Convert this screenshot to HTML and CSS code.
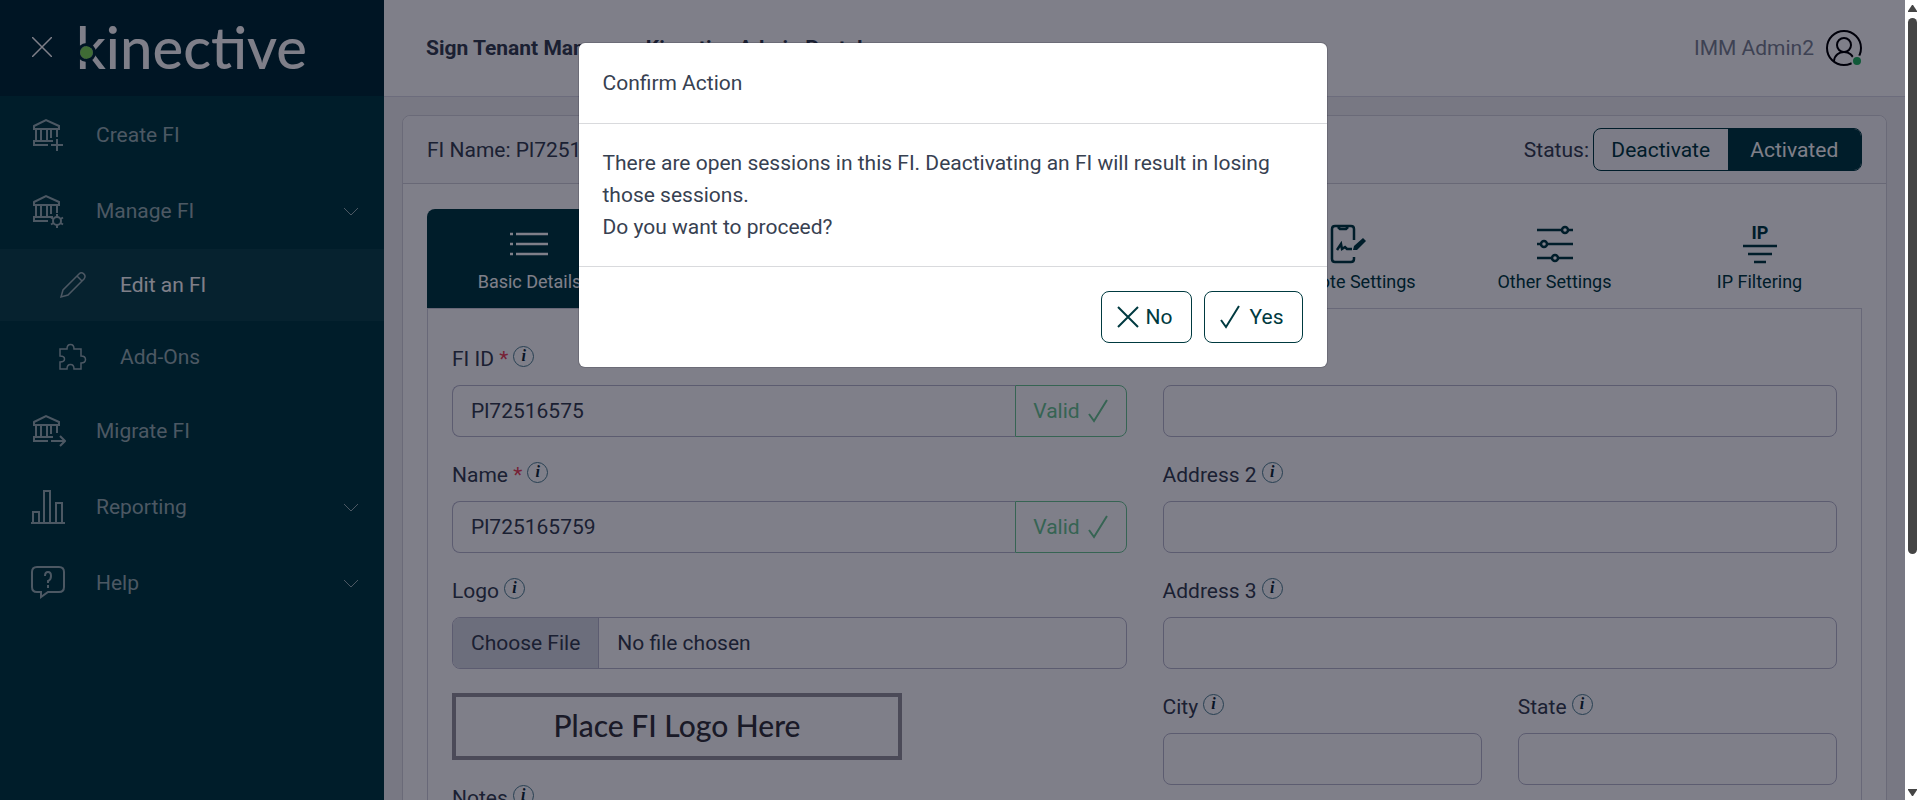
FILE: index.html
```html
<!DOCTYPE html>
<html lang="en">

<head>
    <meta charset="UTF-8">
    <meta name="viewport" content="width=device-width, initial-scale=1">
    <title>Sign Tenant Manager</title>
    <link rel="stylesheet" href="styles.css">
</head>

<body>
    <!-- shared icon shapes -->
    <svg class="icon-defs" aria-hidden="true">
        <symbol id="bank" viewBox="0 0 36 36">
            <path d="M4 9 16 3l13 6v3H4zM6 12v11M11 12v11M17 12v11M21 12v9M27 12v8M4 28v-4h19M3 28h15" />
        </symbol>
        <symbol id="chevron" viewBox="0 0 16 9">
            <path d="M1 1l7 7 7-7" />
        </symbol>
        <symbol id="check" viewBox="0 0 20 24">
            <path d="M1 15l5 7L19 1" />
        </symbol>
    </svg>

    <div class="app">
        <div class="page">
            <aside class="sidebar">
                <div class="brand-bar">
                    <button class="close-menu" type="button" aria-label="Close menu">
                        <svg width="20" height="20" viewBox="0 0 20 20"><path d="M0 0l20 20M20 0L0 20" /></svg>
                    </button>
                    <a class="brand" href="#">kinective</a>
                </div>
                <nav class="menu">
                    <a class="menu-item" href="#">
                        <svg class="menu-icon" viewBox="0 0 36 36"><use href="#bank" /><path d="M27 22v12M21 28h12" /></svg>
                        <span>Create FI</span>
                    </a>
                    <a class="menu-item" href="#">
                        <svg class="menu-icon" viewBox="0 0 36 36"><use href="#bank" /><circle cx="27" cy="28" r="4" /><path d="M27 21v3M27 32v3M21 24.500l2.500 1.500M30.500 30l2.500 1.500M21 31.500l2.500-1.500M30.500 26l2.500-1.500" /></svg>
                        <span>Manage FI</span>
                        <svg class="chevron"><use href="#chevron" /></svg>
                    </a>
                    <a class="menu-item sub-item active" href="#">
                        <svg class="menu-icon" viewBox="0 0 28 28"><path d="M2 26l2-7L20 3c3-3 8 1 5 5L9 24zM18 5l5 5" /></svg>
                        <span>Edit an FI</span>
                    </a>
                    <a class="menu-item sub-item" href="#">
                        <svg class="menu-icon" viewBox="0 0 28 28"><path d="M1 6h7c0-6 7-6 7 0h7v7c6 0 6 7 0 7v6h-7c0-6-7-6-7 0H1v-7c6 0 6-6 0-6z" /></svg>
                        <span>Add-Ons</span>
                    </a>
                    <a class="menu-item" href="#">
                        <svg class="menu-icon" viewBox="0 0 36 36"><use href="#bank" /><path d="M21 28h14M30 23l5 5-5 5" /></svg>
                        <span>Migrate FI</span>
                    </a>
                    <a class="menu-item" href="#">
                        <svg class="menu-icon" viewBox="0 0 36 36"><path d="M1 34h34M3 34V23h6v11M14 34V2h6v32M26 34V14h6v20" /></svg>
                        <span>Reporting</span>
                        <svg class="chevron"><use href="#chevron" /></svg>
                    </a>
                    <a class="menu-item" href="#">
                        <svg class="menu-icon" viewBox="0 0 36 36"><path d="M7 2h22q5 0 5 5v15q0 5-5 5H18l-7 5v-5H7q-5 0-5-5V7q0-5 5-5zM15 11q0-4 3-4t3 4-3 5v2M18 20v3" /></svg>
                        <span>Help</span>
                        <svg class="chevron"><use href="#chevron" /></svg>
                    </a>
                </nav>
            </aside>

            <main class="main">
                <header class="topbar">
                    <h1>Sign Tenant Manager - Kinective Admin Portal</h1>
                    <div class="user">
                        <span>IMM Admin2</span>
                        <svg width="36" height="36" viewBox="0 0 36 36">
                            <circle cx="18" cy="18" r="17" /><circle cx="18" cy="15" r="7" /><path d="M8 31c1-12 19-12 20 0" />
                            <circle class="online" cx="31" cy="31" r="5" />
                        </svg>
                    </div>
                </header>

                <section class="card">
                    <div class="card-header">
                        <span>FI Name: Pl725165759</span>
                        <div class="status">
                            <span>Status:</span>
                            <div class="btn-group">
                                <button type="button">Deactivate</button>
                                <button type="button" class="on">Activated</button>
                            </div>
                        </div>
                    </div>
                    <div class="card-body">
                        <div class="tabs">
                            <button type="button" class="tab selected">
                                <svg viewBox="0 0 40 40"><path d="M0 10h3M6 10h32M0 20h3M6 20h32M0 30h3M6 30h32" /></svg>
                                Basic Details
                            </button>
                            <span class="tab"></span>
                            <span class="tab"></span>
                            <span class="tab"></span>
                            <button type="button" class="tab">
                                <svg viewBox="0 0 40 40"><path d="M24 16V5q0-3-3-3H5Q2 2 2 5v30q0 3 3 3h16q3 0 3-3v-2M8 3l2 2h6l2-2M7 26l4-6 1 5 3-2 2 2h5" /><path class="solid" d="M23 26l1-4 9-8 3 3-9 9z" /></svg>
                                Remote Settings
                            </button>
                            <button type="button" class="tab">
                                <svg viewBox="0 0 40 40"><path d="M2 6h25M34 6h4M2 20h4M13 20h25M2 34h14M23 34h15" /><circle cx="30" cy="6" r="3" /><circle cx="9" cy="20" r="3" /><circle cx="20" cy="34" r="3" /></svg>
                                Other Settings
                            </button>
                            <button type="button" class="tab">
                                <svg viewBox="0 0 40 40"><text x="20" y="15">IP</text><path d="M3 22h34M8 30h24M14 38h12" /></svg>
                                IP Filtering
                            </button>
                        </div>

                        <form class="panel">
                            <div class="column">
                                <div class="field">
                                    <label for="fi-id">FI ID <b>*</b><i class="info">i</i></label>
                                    <div class="input-group">
                                        <input id="fi-id" type="text" value="Pl72516575">
                                        <span class="valid">Valid <svg width="20" height="24"><use href="#check" /></svg></span>
                                    </div>
                                </div>
                                <div class="field">
                                    <label for="fi-name">Name <b>*</b><i class="info">i</i></label>
                                    <div class="input-group">
                                        <input id="fi-name" type="text" value="Pl725165759">
                                        <span class="valid">Valid <svg width="20" height="24"><use href="#check" /></svg></span>
                                    </div>
                                </div>
                                <div class="field">
                                    <label for="logo">Logo<i class="info">i</i></label>
                                    <input id="logo" type="file">
                                    <div class="logo-box">Place FI Logo Here</div>
                                </div>
                                <div class="field">
                                    <label for="notes">Notes<i class="info">i</i></label>
                                    <textarea id="notes"></textarea>
                                </div>
                            </div>
                            <div class="column">
                                <div class="field">
                                    <label for="address1">Address 1<i class="info">i</i></label>
                                    <input id="address1" type="text">
                                </div>
                                <div class="field">
                                    <label for="address2">Address 2<i class="info">i</i></label>
                                    <input id="address2" type="text">
                                </div>
                                <div class="field">
                                    <label for="address3">Address 3<i class="info">i</i></label>
                                    <input id="address3" type="text">
                                </div>
                                <div class="field-row">
                                    <div class="field">
                                        <label for="city">City<i class="info">i</i></label>
                                        <input id="city" type="text">
                                    </div>
                                    <div class="field">
                                        <label for="state">State<i class="info">i</i></label>
                                        <input id="state" type="text">
                                    </div>
                                </div>
                            </div>
                        </form>
                    </div>
                </section>
            </main>

            <!-- Modal -->
            <div class="backdrop">
                <div class="modal" role="dialog" aria-modal="true" aria-labelledby="modal-title">
                    <h2 class="modal-header" id="modal-title">Confirm Action</h2>
                    <div class="modal-body">
                        There are open sessions in this FI. Deactivating an FI will result in losing those sessions.<br>
                        Do you want to proceed?
                    </div>
                    <div class="modal-footer">
                        <button type="button">
                            <svg width="22" height="22" viewBox="0 0 22 22"><path d="M1 1l20 20M21 1L1 21" /></svg>
                            No
                        </button>
                        <button type="button" class="yes">
                            <svg width="20" height="24"><use href="#check" /></svg>
                            Yes
                        </button>
                    </div>
                </div>
            </div>
        </div>

        <div class="scrollbar" aria-hidden="true">
            <svg width="9" height="7" viewBox="0 0 9 7"><path d="M4 0h1l4 6v1H0V6z" /></svg>
            <div class="track"><div class="thumb"></div></div>
            <svg width="9" height="7" viewBox="0 0 9 7"><path d="M4 7h1l4-6V0H0v1z" /></svg>
        </div>
    </div>
</body>

</html>
```
FILE: styles.css
```css
* {
    box-sizing: border-box;
}

body {
    margin: 0;
    font-family: Roboto, "Liberation Sans", sans-serif;
    font-size: 21px;
    line-height: 32px;
    color: #374151;
}

button,
input,
textarea {
    font: inherit;
    color: inherit;
}

svg {
    fill: none;
    stroke: currentColor;
    stroke-width: 2;
    flex: none;
}

.icon-defs {
    display: none;
}

.app {
    display: flex;
    height: 100vh;
    overflow: hidden;
}

.page {
    position: relative;
    display: flex;
    flex: 1;
    min-width: 0;
    overflow: hidden;
}

/* Sidebar */
.sidebar {
    flex: none;
    width: 384px;
    background: #003a40;
    color: #99b0b3;
}

.brand-bar {
    display: flex;
    align-items: center;
    height: 96px;
    padding: 0 0 2px 32px;
    background: #002a34;
}

.close-menu {
    padding: 0;
    border: 0;
    background: none;
    line-height: 0;
    color: #fff;
}

.close-menu svg {
    stroke-width: 1.5;
}

.brand {
    position: relative;
    margin-left: 24px;
    font-family: Lato, sans-serif;
    font-size: 58px;
    font-weight: 500;
    line-height: 64px;
    color: #fff;
    text-decoration: none;
}

/* green dot that cuts the stem of the k */
.brand::after {
    content: "";
    position: absolute;
    left: 1px;
    top: 28px;
    width: 13px;
    height: 13px;
    border: 3px solid #002a34;
    border-radius: 50%;
    background: #7ed957;
    background-clip: padding-box;
}

.menu {
    padding-top: 1px;
}

.menu-item {
    display: flex;
    align-items: center;
    height: 76px;
    padding: 0 25px 0 30px;
    color: inherit;
    text-decoration: none;
}

.menu-icon {
    width: 36px;
    height: 36px;
    margin-right: 30px;
}

.sub-item {
    height: 72px;
    padding-left: 59px;
}

.sub-item .menu-icon {
    width: 28px;
    height: 28px;
    margin-right: 33px;
    stroke-width: 1.5;
}

.active {
    background: #0d444a;
}

.active span {
    color: #fff;
}

.chevron {
    width: 16px;
    height: 9px;
    margin-left: auto;
    stroke-width: 1;
}

/* Main area */
.main {
    flex: 1;
    min-width: 0;
    background: #f1f1f2;
}

.topbar {
    display: flex;
    align-items: center;
    justify-content: space-between;
    height: 97px;
    padding: 0 43px 0 42px;
    background: #fff;
    border-bottom: 1px solid #d8d8e4;
}

.topbar h1 {
    margin: 0;
    font-size: 21px;
    font-weight: 700;
}

.user {
    display: flex;
    align-items: center;
    gap: 12px;
    color: #7c8493;
}

.user svg {
    color: #000;
}

.user .online {
    fill: #22b35e;
    stroke: #fff;
}

.card {
    margin: 18px 18px 0;
    background: #fff;
    border: 1px solid #d4d4dc;
    border-radius: 8px;
}

.card-header {
    display: flex;
    align-items: center;
    justify-content: space-between;
    height: 68px;
    padding: 0 24px;
    background: #f8f8fa;
    border-bottom: 1px solid #d0d0d8;
    border-radius: 8px 8px 0 0;
}

.status {
    display: flex;
    align-items: center;
    gap: 4px;
}

.btn-group {
    display: flex;
    width: 269px;
    height: 43px;
    border: 1px solid #003a40;
    border-radius: 8px;
    overflow: hidden;
}

.btn-group button {
    flex: 1;
    padding: 0;
    border: 0;
    background: none;
    color: #003a40;
}

.btn-group .on {
    background: #003a40;
    color: #fff;
}

.card-body {
    padding: 25px 24px 0;
}

.tabs {
    display: flex;
    height: 99px;
}

.tab {
    display: flex;
    flex: 1;
    flex-direction: column;
    align-items: center;
    gap: 6px;
    padding: 15px 0 0;
    border: 0;
    background: none;
    font-size: 18px;
    line-height: 24px;
    color: #003a40;
}

.tab svg {
    width: 40px;
    height: 40px;
    stroke-width: 2.5;
}

.tab .solid {
    fill: currentColor;
    stroke: none;
}

.tab text {
    fill: currentColor;
    stroke: none;
    font-size: 18px;
    font-weight: 700;
    text-anchor: middle;
}

.selected {
    background: #003a40;
    border-radius: 8px 8px 0 0;
    color: #fff;
}

/* Form */
.panel {
    display: grid;
    grid-template-columns: 1fr 1fr;
    gap: 36px;
    padding: 34px 24px 24px;
    border: 1px solid #d0d0dc;
}

.field {
    margin-bottom: 22px;
}

.field-row {
    display: grid;
    grid-template-columns: 1fr 1fr;
    gap: 36px;
}

.field label {
    display: flex;
    margin-bottom: 10px;
    white-space: pre;
}

.field label b {
    font-weight: 400;
    color: #ee4458;
}

.info {
    width: 21px;
    height: 21px;
    margin: 3px 0 0 5px;
    border: 1px solid #4f7f90;
    border-radius: 50%;
    font: italic bold 16px/18px "Liberation Serif", serif;
    text-align: center;
    color: #102a36;
}

.field input,
.field textarea {
    display: block;
    width: 100%;
    height: 52px;
    padding: 0 18px;
    border: 1px solid #b8b8cc;
    border-radius: 8px;
    background: #fff;
}

.field textarea {
    height: 120px;
}

.input-group {
    display: flex;
}

.field .input-group input {
    flex: 1;
    min-width: 0;
    border-right: 0;
    border-radius: 8px 0 0 8px;
}

.valid {
    display: flex;
    align-items: center;
    justify-content: center;
    gap: 8px;
    width: 112px;
    border: 1px solid #6cc893;
    border-radius: 0 8px 8px 0;
    color: #6cc893;
}

.field input[type="file"] {
    padding: 0;
    line-height: 50px;
    overflow: hidden;
}

.field input::file-selector-button {
    height: 50px;
    margin: 0 18px 0 0;
    padding: 0 18px;
    border: 0;
    border-right: 1px solid #b8b8cc;
    background: #d8dce4;
    font: inherit;
    color: inherit;
}

.logo-box {
    width: 450px;
    height: 67px;
    margin-top: 24px;
    border: 4px solid #96949c;
    font-family: Lato, sans-serif;
    font-size: 30px;
    font-weight: 500;
    line-height: 56px;
    text-align: center;
    color: #35353b;
}

/* Modal */
.backdrop {
    position: absolute;
    inset: 0;
    padding-top: 43px;
    background: rgba(0, 0, 20, 0.5);
}

.modal {
    max-width: 748px;
    margin: 0 auto;
    background: #fff;
    border-radius: 6px;
    box-shadow: 0 0 0 1px rgba(0, 0, 20, 0.15);
}

.modal-header {
    margin: 0;
    padding: 24px;
    border-bottom: 1px solid #d9dadd;
    font-size: 21px;
    font-weight: 400;
}

.modal-body {
    padding: 23px 24px;
}

.modal-footer {
    display: flex;
    justify-content: flex-end;
    gap: 12px;
    padding: 24px;
    border-top: 1px solid #d9dadd;
}

.modal-footer button {
    display: flex;
    align-items: center;
    gap: 7px;
    height: 52px;
    padding: 0 18px 0 15px;
    border: 1px solid #003a40;
    border-radius: 8px;
    background: #fff;
    color: #003a40;
}

.modal-footer .yes {
    gap: 10px;
}

/* Scrollbar */
.scrollbar {
    display: flex;
    flex: none;
    flex-direction: column;
    align-items: center;
    gap: 6px;
    width: 15px;
    padding: 5px 0 4px;
    background: #fff;
}

.scrollbar svg {
    fill: #454545;
    stroke: none;
}

.track {
    flex: 1;
    width: 9px;
}

.thumb {
    height: 70%;
    border-radius: 5px;
    background: #454545;
}
```
